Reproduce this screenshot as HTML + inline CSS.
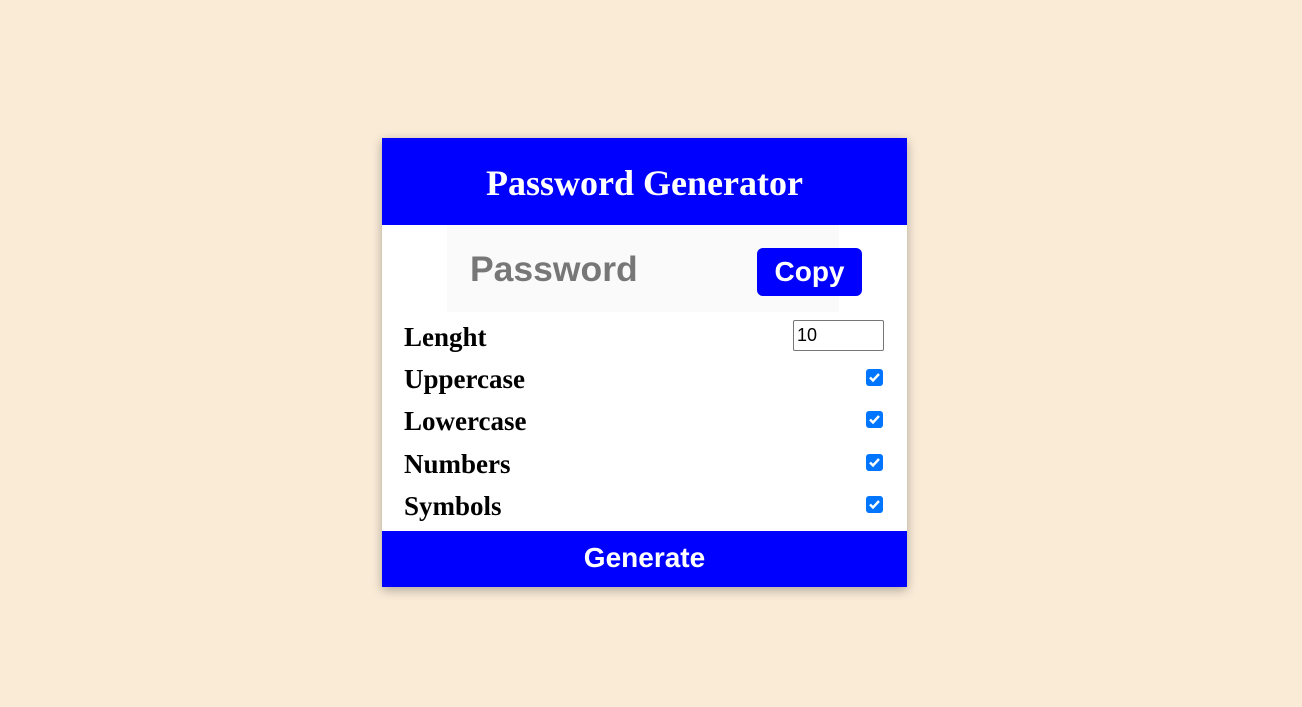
<!DOCTYPE html>
<html><head><style>
body{margin:0;width:1302px;height:707px;background:#faebd7;position:relative;overflow:hidden;font-family:"Liberation Serif",serif}
.card{position:absolute;left:382px;top:138px;width:525px;height:449px;background:#fff;box-shadow:0 3px 10px rgba(0,0,0,.3)}
.hd{position:absolute;left:0;top:0;width:525px;height:87px;background:#00f;color:#fff;font-weight:bold;font-size:36px;text-align:center;line-height:90px}
.pw{position:absolute;left:65px;top:87px;width:392px;height:87px;background:#fafafa}
.pwt{position:absolute;left:23px;top:0;line-height:88px;font-family:"Liberation Sans",sans-serif;font-weight:bold;font-size:35.5px;color:#777}
.copy{position:absolute;left:375px;top:110px;width:105px;height:48px;background:#00f;border-radius:6px;color:#fff;font-family:"Liberation Sans",sans-serif;font-weight:bold;font-size:28px;text-align:center;line-height:48px}
.lb{position:absolute;left:22px;font-weight:bold;font-size:27px;color:#000}
.cb{position:absolute;left:484px;width:17px;height:17px;background:#0075ff;border-radius:3px}
.num{position:absolute;left:411px;top:182px;font-family:"Liberation Sans",sans-serif;font-size:18px;line-height:29px;padding-left:3px;box-sizing:border-box;width:91px;height:31px;border:1px solid #767676;border-radius:2px}
.gen{position:absolute;left:0;top:393px;width:525px;height:56px;background:#00f;color:#fff;font-family:"Liberation Sans",sans-serif;font-weight:bold;font-size:28px;text-align:center;line-height:54px}
</style></head><body>
<div class="card">
<div class="hd">Password Generator</div>
<div class="pw"><div class="pwt">Password</div></div>
<div class="copy">Copy</div>
<div class="lb" style="top:184px">Lenght</div>
<div class="num">10</div>
<div class="lb" style="top:226px">Uppercase</div>
<div class="lb" style="top:268px">Lowercase</div>
<div class="lb" style="top:311px">Numbers</div>
<div class="lb" style="top:353px">Symbols</div>
<svg class="cb" style="top:231px" viewBox="0 0 17 17"><path d="M4 8.5l3 3 6-6.5" stroke="#fff" stroke-width="2.4" fill="none"/></svg>
<svg class="cb" style="top:273px" viewBox="0 0 17 17"><path d="M4 8.5l3 3 6-6.5" stroke="#fff" stroke-width="2.4" fill="none"/></svg>
<svg class="cb" style="top:316px" viewBox="0 0 17 17"><path d="M4 8.5l3 3 6-6.5" stroke="#fff" stroke-width="2.4" fill="none"/></svg>
<svg class="cb" style="top:358px" viewBox="0 0 17 17"><path d="M4 8.5l3 3 6-6.5" stroke="#fff" stroke-width="2.4" fill="none"/></svg>
<div class="gen">Generate</div>
</div>
</body></html>
